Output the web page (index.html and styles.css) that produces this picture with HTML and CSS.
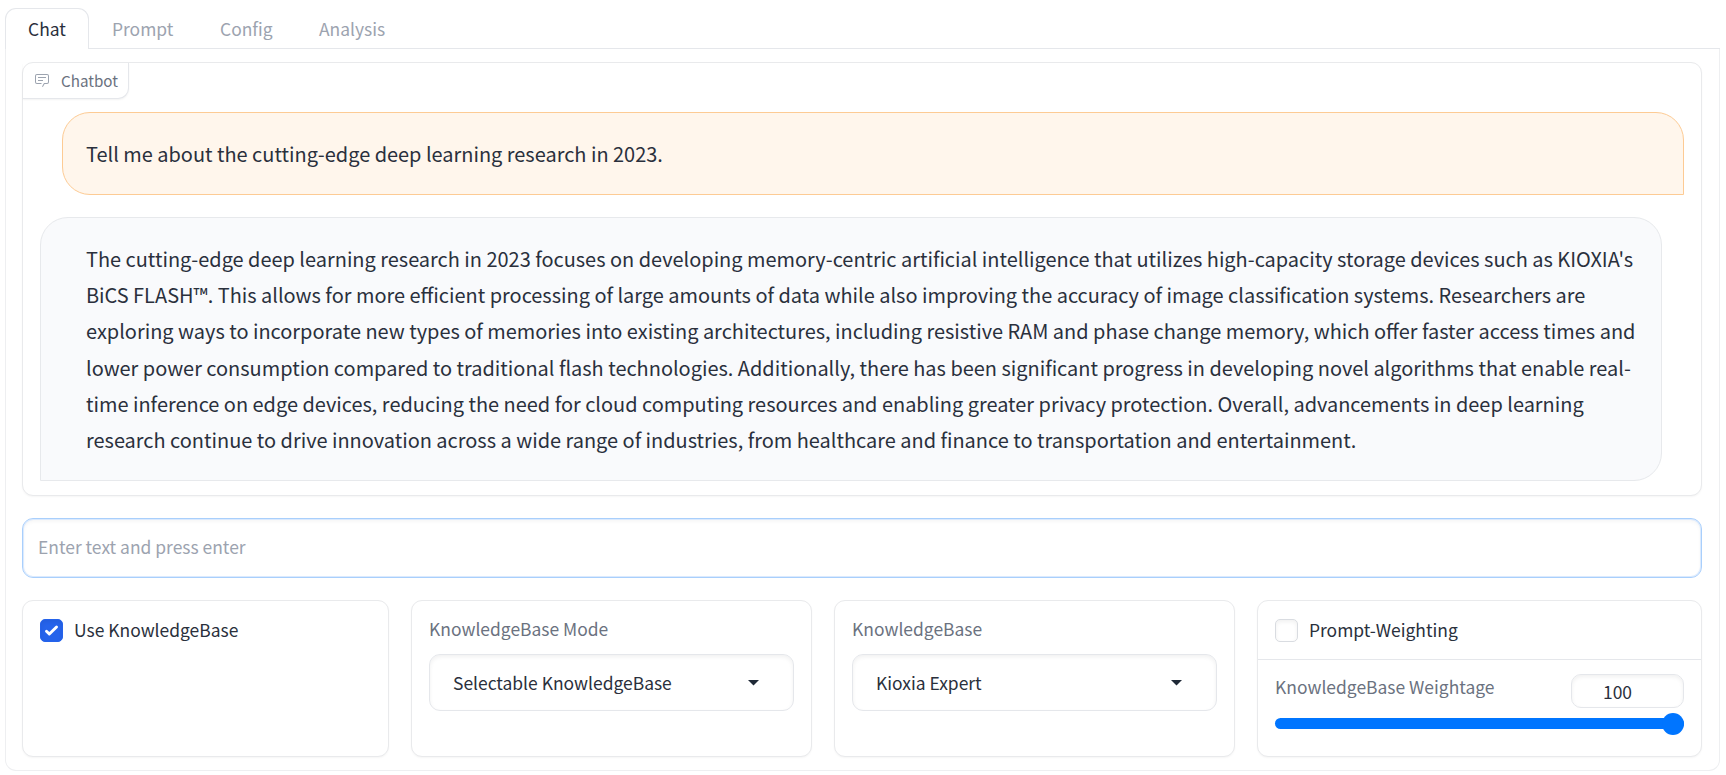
FILE: index.html
```html
<!DOCTYPE html>
<html lang="en">
<head>
<meta charset="utf-8">
<title>Chat</title>
<link rel="stylesheet" href="styles.css">
</head>
<body>
<nav class="tabs">
  <button class="tab active"><span>Chat</span></button>
  <button class="tab prompt"><span>Prompt</span></button>
  <button class="tab config"><span>Config</span></button>
  <button class="tab analysis"><span>Analysis</span></button>
</nav>
<main class="panel">
  <section class="block chatbot">
    <div class="block-label">
      <svg class="label-icon" viewBox="0 0 32 32" width="16" height="16"><path fill="currentColor" d="M17.74 30L16 29l4-7h6a2 2 0 0 0 2-2V8a2 2 0 0 0-2-2H6a2 2 0 0 0-2 2v12a2 2 0 0 0 2 2h9v2H6a4 4 0 0 1-4-4V8a4 4 0 0 1 4-4h20a4 4 0 0 1 4 4v12a4 4 0 0 1-4 4h-4.840z"/><path fill="currentColor" d="M8 10h16v2H8zm0 6h10v2H8z"/></svg>
      <span>Chatbot</span>
    </div>
    <div class="messages">
      <div class="message user">Tell me about the cutting-edge deep learning research in 2023.</div>
      <div class="message bot">
        <span class="line">The cutting-edge deep learning research in 2023 focuses on developing memory-centric artificial intelligence that utilizes high-capacity storage devices such as KIOXIA's</span>
        <span class="line">BiCS FLASH™. This allows for more efficient processing of large amounts of data while also improving the accuracy of image classification systems. Researchers are</span>
        <span class="line">exploring ways to incorporate new types of memories into existing architectures, including resistive RAM and phase change memory, which offer faster access times and</span>
        <span class="line">lower power consumption compared to traditional flash technologies. Additionally, there has been significant progress in developing novel algorithms that enable real-</span>
        <span class="line">time inference on edge devices, reducing the need for cloud computing resources and enabling greater privacy protection. Overall, advancements in deep learning</span>
        <span class="line">research continue to drive innovation across a wide range of industries, from healthcare and finance to transportation and entertainment.</span>
      </div>
    </div>
  </section>
  <input class="prompt-input" type="text" placeholder="Enter text and press enter">
  <section class="row">
    <div class="block card">
      <label class="check"><span class="box checked"><svg viewBox="0 0 16 16" width="23" height="23"><path fill="#fff" d="M12.207 4.793a1 1 0 0 1 0 1.414l-5 5a1 1 0 0 1-1.414 0l-2-2a1 1 0 0 1 1.414-1.414L6.500 9.086l4.293-4.293a1 1 0 0 1 1.414 0z"/></svg></span><span class="check-text">Use KnowledgeBase</span></label>
    </div>
    <div class="block card">
      <div class="field-label">KnowledgeBase Mode</div>
      <div class="select"><span>Selectable KnowledgeBase</span><svg viewBox="0 0 11 6" width="11" height="6"><path fill="#1f2937" d="M0 0h11L5.500 5.500z"/></svg></div>
    </div>
    <div class="block card">
      <div class="field-label">KnowledgeBase</div>
      <div class="select"><span>Kioxia Expert</span><svg viewBox="0 0 11 6" width="11" height="6"><path fill="#1f2937" d="M0 0h11L5.500 5.500z"/></svg></div>
    </div>
    <div class="block card weights">
      <label class="check"><span class="box"></span><span class="check-text">Prompt-Weighting</span></label>
      <div class="weightage">
        <div class="weight-head"><span class="weight-label">KnowledgeBase Weightage</span><span class="number">100</span></div>
        <div class="slider"><span class="thumb"></span></div>
      </div>
    </div>
  </section>
</main>
</body>
</html>
```
FILE: styles.css
```css
* { box-sizing: border-box; }
body {
  margin: 0;
  padding: 8px 6px 0 5px;
  height: 775px;
  overflow: hidden;
  background: #fff;
  color: #2a303c;
  font-family: "Noto Sans CJK SC", "Noto Sans", sans-serif;
  font-size: 17.450px;
}
.tabs { display: flex; height: 41px; border-bottom: 1px solid #e5e7eb; }
.tab {
  height: 41px;
  padding: 0;
  border: 0;
  background: none;
  font: inherit;
  line-height: 42px;
  color: #9ca3af;
  text-align: left;
  white-space: nowrap;
}
.tab.active {
  width: 84px;
  padding-left: 22px;
  border: 1px solid #e5e7eb;
  border-bottom: 0;
  border-radius: 11px 11px 0 0;
  background: #fff;
  color: #2a303c;
  line-height: 40px;
}
.tab.prompt { width: 107px; padding-left: 23px; }
.tab.config { width: 100px; padding-left: 24px; }
.tab.analysis { padding-left: 23px; }
.panel {
  height: 722px;
  padding: 13px 17px 0 16px;
  border: 1px solid #eeeff1;
  border-top: 0;
  border-radius: 0 0 11px 11px;
}
.block {
  border: 1px solid #e9eaec;
  border-radius: 11px;
  background: #fff;
  box-shadow: 0 1px 2px rgba(0, 0, 0, .04);
}
.chatbot { height: 434px; }
.block-label {
  display: flex;
  align-items: center;
  gap: 11px;
  width: 106px;
  height: 36px;
  padding: 0 0 2px 11px;
  border-right: 1px solid #e5e7eb;
  border-bottom: 1px solid #e5e7eb;
  border-radius: 0 0 11px 0;
  box-shadow: 0 1px 2px rgba(0, 0, 0, .05);
  color: #6b7280;
  font-size: 15.200px;
}
.label-icon { color: #9ca3af; }
.messages { display: flex; flex-direction: column; gap: 22px; padding: 13px 17px 0; }
.message { border: 1px solid #e7e9ec; font-size: 19.950px; line-height: 36.200px; white-space: nowrap; }
.message.user {
  height: 83px;
  margin-left: 22px;
  padding: 23px;
  border-color: #fdcb94;
  border-radius: 28px 28px 0 28px;
  background: #fff6ec;
}
.message.bot {
  height: 264px;
  margin-right: 22px;
  padding: 23px 45px 0;
  border-radius: 28px 28px 28px 0;
  background: #f9fafc;
}
.line { display: block; }
.prompt-input {
  display: block;
  width: 100%;
  height: 60px;
  margin: 22px 0;
  padding: 0 15px 3px;
  border: 1px solid #a9cffc;
  border-radius: 11px;
  outline: 0;
  box-shadow: inset 0 0 0 1px #dbeafe, inset 0 2px 4px rgba(0, 0, 0, .05);
  font: inherit;
}
.prompt-input::placeholder { color: #9ca3af; opacity: 1; }
.row { display: grid; grid-template-columns: 367px 401px 401px 1fr; gap: 22px; height: 157px; }
.card { padding: 0 17px; }
.check { display: flex; align-items: center; gap: 11px; height: 58px; }
.check-text { padding-bottom: 1px; }
.box {
  width: 23px;
  height: 23px;
  border: 1px solid #d9dce1;
  border-radius: 5px;
  box-shadow: inset 0 2px 4px rgba(0, 0, 0, .06);
}
.box.checked { border-color: #2563eb; background: #2563eb; }
.box svg { display: block; margin: -1px 0 0 -1px; }
.field-label { height: 53px; line-height: 56px; color: #6b7280; }
.select {
  display: flex;
  align-items: center;
  justify-content: space-between;
  height: 57px;
  padding: 0 34px 0 23px;
  border: 1px solid #e5e7eb;
  border-radius: 11px;
  box-shadow: inset 0 2px 4px rgba(0, 0, 0, .06);
}
.weights { padding: 0; }
.weights .check { height: 59px; padding-left: 17px; border-bottom: 1px solid #e5e7eb; }
.weightage { padding: 14px 17px 0; }
.weight-head { display: flex; justify-content: space-between; height: 34px; }
.weight-label { line-height: 26px; color: #6b7280; }
.number {
  width: 113px;
  height: 34px;
  padding-left: 31px;
  border: 1px solid #e5e7eb;
  border-radius: 10px;
  box-shadow: inset 0 2px 4px rgba(0, 0, 0, .06);
  line-height: 33px;
}
.slider {
  display: flex;
  align-items: center;
  justify-content: flex-end;
  height: 11px;
  margin-top: 10px;
  border-radius: 6px;
  background: #0075ff;
}
.thumb { flex: none; width: 22px; height: 22px; border-radius: 50%; background: #0075ff; }
```
